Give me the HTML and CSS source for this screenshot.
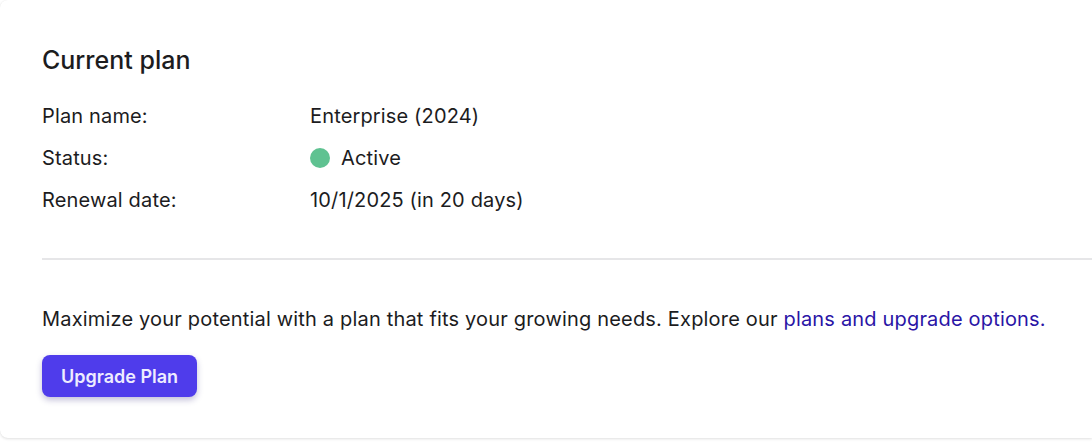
FILE: index.html
```html
<!DOCTYPE html>
<html lang="en">
<head>
<meta charset="utf-8">
<title>Current plan</title>
<link rel="stylesheet" href="styles.css">
</head>
<body>
<section class="card">
  <h2 class="title">Current plan</h2>
  <dl class="details">
    <div class="row"><dt>Plan name:</dt><dd>Enterprise (2024)</dd></div>
    <div class="row"><dt>Status:</dt><dd><span class="dot"></span>Active</dd></div>
    <div class="row"><dt>Renewal date:</dt><dd>10/1/2025 (in 20 days)</dd></div>
  </dl>
  <hr class="divider">
  <p class="note">Maximize your potential with a plan that fits your growing needs. Explore our <a href="#" class="link">plans and upgrade options.</a></p>
  <button class="btn" type="button">Upgrade Plan</button>
</section>
</body>
</html>
```
FILE: styles.css
```css
html, body {
  margin: 0;
  padding: 0;
  background: #ffffff;
  overflow: hidden;
}
body {
  font-family: Inter, "Liberation Sans", sans-serif;
  color: #1c1c1e;
  width: 1092px;
  height: 442px;
}
.card {
  width: 100%;
  box-sizing: border-box;
  background: #fff;
  border-radius: 8px 0 0 8px;
  box-shadow: 0 1px 3px rgba(0,0,0,0.12), 0 0 1px rgba(0,0,0,0.06);
  padding: 46px 0 41px 42px;
}
.title {
  margin: 0;
  font-size: 25px;
  line-height: 28px;
  font-weight: 500;
}
.details {
  margin: 28px 0 0;
  display: flex;
  flex-direction: column;
  gap: 14px;
}
.row {
  display: grid;
  grid-template-columns: 268px 1fr;
  font-size: 20px;
  line-height: 28px;
  letter-spacing: 0.15px;
}
.row dt, .row dd { margin: 0; }
.row dd { display: flex; align-items: center; }
.dot {
  width: 20px;
  height: 20px;
  border-radius: 50%;
  background: #5fc291;
  margin-right: 11px;
}
.divider {
  margin: 44px 0 0;
  border: 0;
  height: 2px;
  background: #e6e6e8;
}
.note {
  margin: 45px 0 0;
  font-size: 20px;
  line-height: 28px;
  letter-spacing: 0.18px;
}
.link {
  color: #2a15a6;
  text-decoration: none;
}
.btn {
  margin-top: 22px;
  height: 42px;
  width: 155px;
  border: 0;
  border-radius: 8px;
  background: #4f3ceb;
  color: #eeecff;
  font-family: Inter, "Liberation Sans", sans-serif;
  font-size: 18px;
  font-weight: 600;
  box-shadow: 0 3px 6px rgba(40,30,120,0.28);
  cursor: pointer;
}
```
